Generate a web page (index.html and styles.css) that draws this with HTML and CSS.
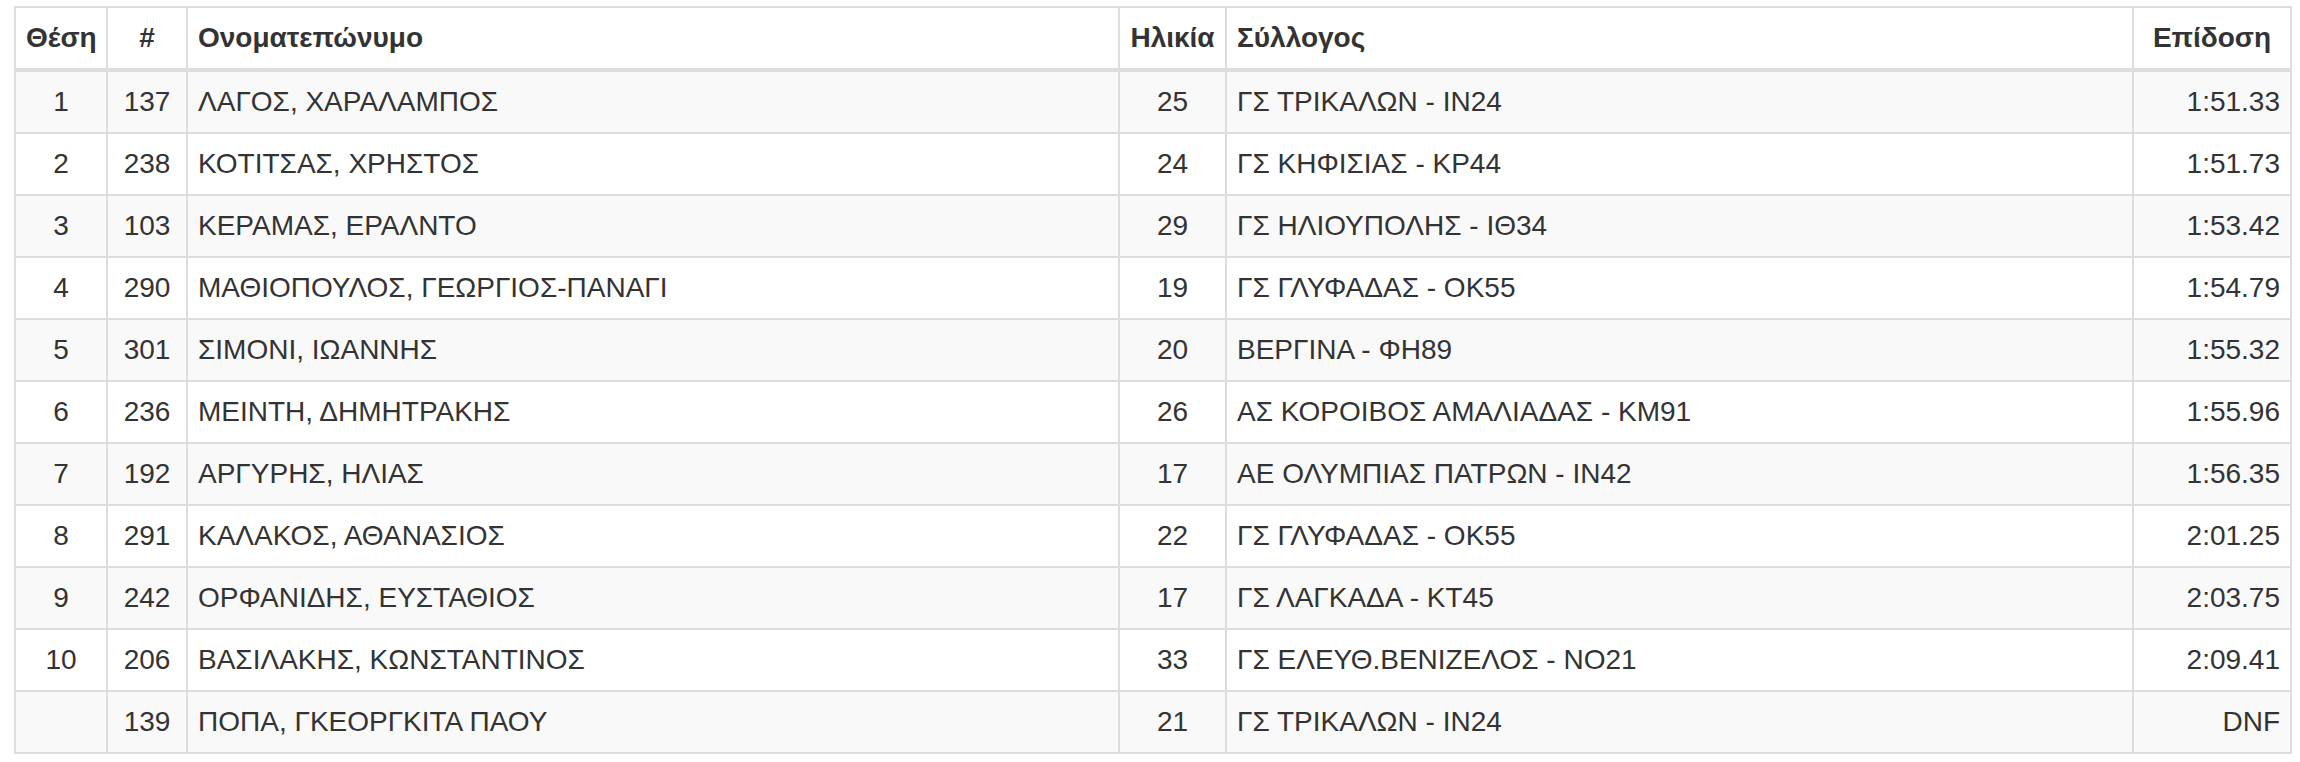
FILE: index.html
```html
<!DOCTYPE html>
<html lang="el">
<head>
<meta charset="utf-8">
<title>Αποτελέσματα</title>
<link rel="stylesheet" href="styles.css">
</head>
<body>
<table class="results">
  <colgroup>
    <col class="c-pos"><col class="c-num"><col class="c-name"><col class="c-age"><col class="c-club"><col class="c-time">
  </colgroup>
  <thead>
    <tr>
      <th class="center">Θέση</th>
      <th class="center">#</th>
      <th>Ονοματεπώνυμο</th>
      <th class="center">Ηλικία</th>
      <th>Σύλλογος</th>
      <th class="center">Επίδοση</th>
    </tr>
  </thead>
  <tbody>
    <tr><td class="center">1</td><td class="center">137</td><td>ΛΑΓΟΣ, ΧΑΡΑΛΑΜΠΟΣ</td><td class="center">25</td><td>ΓΣ ΤΡΙΚΑΛΩΝ - ΙΝ24</td><td class="right">1:51.33</td></tr>
    <tr><td class="center">2</td><td class="center">238</td><td>ΚΟΤΙΤΣΑΣ, ΧΡΗΣΤΟΣ</td><td class="center">24</td><td>ΓΣ ΚΗΦΙΣΙΑΣ - ΚΡ44</td><td class="right">1:51.73</td></tr>
    <tr><td class="center">3</td><td class="center">103</td><td>ΚΕΡΑΜΑΣ, ΕΡΑΛΝΤΟ</td><td class="center">29</td><td>ΓΣ ΗΛΙΟΥΠΟΛΗΣ - ΙΘ34</td><td class="right">1:53.42</td></tr>
    <tr><td class="center">4</td><td class="center">290</td><td>ΜΑΘΙΟΠΟΥΛΟΣ, ΓΕΩΡΓΙΟΣ-ΠΑΝΑΓΙ</td><td class="center">19</td><td>ΓΣ ΓΛΥΦΑΔΑΣ - ΟΚ55</td><td class="right">1:54.79</td></tr>
    <tr><td class="center">5</td><td class="center">301</td><td>ΣΙΜΟΝΙ, ΙΩΑΝΝΗΣ</td><td class="center">20</td><td>ΒΕΡΓΙΝΑ - ΦΗ89</td><td class="right">1:55.32</td></tr>
    <tr><td class="center">6</td><td class="center">236</td><td>ΜΕΙΝΤΗ, ΔΗΜΗΤΡΑΚΗΣ</td><td class="center">26</td><td>ΑΣ ΚΟΡΟΙΒΟΣ ΑΜΑΛΙΑΔΑΣ - ΚΜ91</td><td class="right">1:55.96</td></tr>
    <tr><td class="center">7</td><td class="center">192</td><td>ΑΡΓΥΡΗΣ, ΗΛΙΑΣ</td><td class="center">17</td><td>ΑΕ ΟΛΥΜΠΙΑΣ ΠΑΤΡΩΝ - ΙΝ42</td><td class="right">1:56.35</td></tr>
    <tr><td class="center">8</td><td class="center">291</td><td>ΚΑΛΑΚΟΣ, ΑΘΑΝΑΣΙΟΣ</td><td class="center">22</td><td>ΓΣ ΓΛΥΦΑΔΑΣ - ΟΚ55</td><td class="right">2:01.25</td></tr>
    <tr><td class="center">9</td><td class="center">242</td><td>ΟΡΦΑΝΙΔΗΣ, ΕΥΣΤΑΘΙΟΣ</td><td class="center">17</td><td>ΓΣ ΛΑΓΚΑΔΑ - ΚΤ45</td><td class="right">2:03.75</td></tr>
    <tr><td class="center">10</td><td class="center">206</td><td>ΒΑΣΙΛΑΚΗΣ, ΚΩΝΣΤΑΝΤΙΝΟΣ</td><td class="center">33</td><td>ΓΣ ΕΛΕΥΘ.ΒΕΝΙΖΕΛΟΣ - ΝΟ21</td><td class="right">2:09.41</td></tr>
    <tr><td class="center"></td><td class="center">139</td><td>ΠΟΠΑ, ΓΚΕΟΡΓΚΙΤΑ ΠΑΟΥ</td><td class="center">21</td><td>ΓΣ ΤΡΙΚΑΛΩΝ - ΙΝ24</td><td class="right">DNF</td></tr>
  </tbody>
</table>
</body>
</html>
```

FILE: styles.css
```css
html, body {
  margin: 0;
  padding: 0;
  background: #fff;
}
body {
  padding: 6px 0 0 14px;
  font-family: "Liberation Sans", Arial, "Helvetica Neue", sans-serif;
  font-size: 28px;
  line-height: 40px;
  color: #333;
}
.results {
  table-layout: fixed;
  width: 2278px;
  border-collapse: separate;
  border-spacing: 0;
  border-top: 2px solid #ddd;
  border-left: 2px solid #ddd;
}
.c-pos { width: 92px; }
.c-num { width: 80px; }
.c-name { width: 932px; }
.c-age { width: 107px; }
.c-club { width: 907px; }
.c-time { width: 158px; }

.results th,
.results td {
  box-sizing: border-box;
  padding: 10px;
  border-right: 2px solid #ddd;
  border-bottom: 2px solid #ddd;
  text-align: left;
  vertical-align: top;
  white-space: nowrap;
  overflow: hidden;
}
.results th {
  font-weight: bold;
  border-bottom-width: 4px;
}
.results tbody tr:nth-child(odd) td {
  background: #f9f9f9;
}
.results .center { text-align: center; }
.results .right { text-align: right; }
```
